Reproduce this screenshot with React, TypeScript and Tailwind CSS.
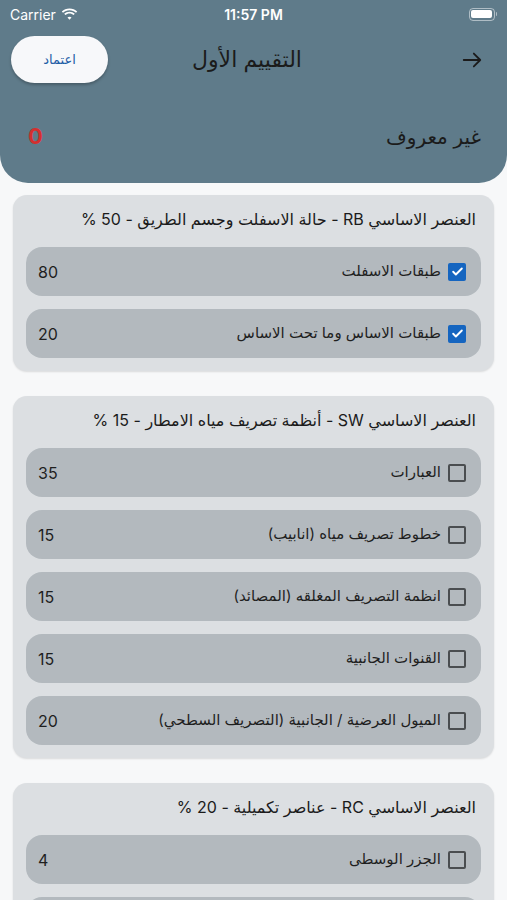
import React from 'react';

type Item = { label: string; value: number; checked?: boolean };
type Group = { title: string; items: Item[] };

const groups: Group[] = [
  {
    title: 'العنصر الاساسي RB - حالة الاسفلت وجسم الطريق - 50 %',
    items: [
      { label: 'طبقات الاسفلت', value: 80, checked: true },
      { label: 'طبقات الاساس وما تحت الاساس', value: 20, checked: true },
    ],
  },
  {
    title: 'العنصر الاساسي SW - أنظمة تصريف مياه الامطار - 15 %',
    items: [
      { label: 'العبارات', value: 35 },
      { label: 'خطوط تصريف مياه (انابيب)', value: 15 },
      { label: 'انظمة التصريف المغلقه (المصائد)', value: 15 },
      { label: 'القنوات الجانبية', value: 15 },
      { label: 'الميول العرضية / الجانبية (التصريف السطحي)', value: 20 },
    ],
  },
  {
    title: 'العنصر الاساسي RC - عناصر تكميلية - 20 %',
    items: [
      { label: 'الجزر الوسطى', value: 4 },
      { label: 'الأرصفة', value: 4 },
    ],
  },
];

const font = { fontFamily: 'Inter, "DejaVu Sans", sans-serif' };

function Checkbox({ checked }: { checked?: boolean }) {
  if (checked) {
    return (
      <span className="flex h-[18px] w-[18px] items-center justify-center rounded-[2px] bg-[#1565c0]">
        <svg width="13" height="13" viewBox="0 0 24 24" fill="none" stroke="white" strokeWidth="3.5" strokeLinecap="round" strokeLinejoin="round">
          <path d="M4 12.5l5 5L20 6.5" />
        </svg>
      </span>
    );
  }
  return <span className="h-[18px] w-[18px] rounded-[2px] border-2 border-[#4a4d50]" />;
}

function StatusBar() {
  return (
    <div dir="ltr" className="flex h-[28px] items-center justify-between px-[10px] text-white">
      <div className="flex w-[120px] items-center gap-[5px] text-[14px]">
        <span>Carrier</span>
        <svg width="17" height="12" viewBox="0 0 17 12" fill="white">
          <path d="M8.5 2.2c2.5 0 4.8 1 6.5 2.6l1.2-1.3C14.2 1.6 11.5.5 8.5.5S2.8 1.6.8 3.5L2 4.8c1.7-1.6 4-2.6 6.5-2.6z" />
          <path d="M8.5 5.5c1.6 0 3 .6 4.1 1.6l1.2-1.3C12.4 4.5 10.5 3.8 8.5 3.8S4.6 4.5 3.2 5.8l1.2 1.3c1.1-1 2.5-1.6 4.1-1.6z" />
          <path d="M8.5 8.7c.8 0 1.5.3 2 .8L8.5 11.7l-2-2.2c.5-.5 1.2-.8 2-.8z" />
        </svg>
      </div>
      <span className="text-[14px] font-semibold">11:57 PM</span>
      <div className="flex w-[120px] justify-end">
        <div className="flex items-center">
          <div className="flex h-[13px] w-[26px] items-center rounded-[4px] border border-white/50 p-[1.5px]">
            <div className="h-full w-full rounded-[2px] bg-white" />
          </div>
          <div className="ml-[1px] h-[4px] w-[1.5px] rounded-r bg-white/50" />
        </div>
      </div>
    </div>
  );
}

export default function App() {
  return (
    <div dir="rtl" className="min-h-[900px] bg-[#f7f8f9]" style={font}>
      {/* Header */}
      <div className="rounded-b-[28px] bg-[#5f7b8a] pb-[30px]">
        <StatusBar />
        <div className="mt-[8px] grid grid-cols-[1fr_auto_1fr] items-center pl-[11px] pr-[24px]">
          <div className="flex justify-start">
            <svg width="22" height="22" viewBox="0 0 24 24" fill="none" stroke="#1b1b1b" strokeWidth="2" strokeLinecap="round" strokeLinejoin="round">
              <path d="M3 12h18M14 5l7 7-7 7" />
            </svg>
          </div>
          <h1 className="text-[22px] text-[#1b1b1b]">التقييم الأول</h1>
          <div className="flex justify-end">
            <button className="h-[47px] w-[97px] rounded-full bg-[#f7f8fa] text-[13px] text-[#1e5ea6] shadow-[0_2px_3px_rgba(0,0,0,0.25)]">
              اعتماد
            </button>
          </div>
        </div>
        <div className="mt-[37px] flex items-center justify-between pl-[28px] pr-[26px]">
          <span className="text-[20px] text-[#1b1b1b]">غير معروف</span>
          <span className="text-[22px] font-bold text-[#d32f2f]">0</span>
        </div>
      </div>

      {/* Groups */}
      <div className="mt-[12px] flex flex-col gap-[25px] px-[13px]">
        {groups.map((g) => (
          <div key={g.title} className="rounded-[14px] bg-[#dcdfe2] px-[13px] pb-[13px] pt-[12px] shadow-[0_1px_2px_rgba(0,0,0,0.12)]">
            <div className="pr-[5px] text-[16px] leading-[24px] text-[#1b1b1b]">{g.title}</div>
            <div className="mt-[16px] flex flex-col gap-[13px]">
              {g.items.map((it) => (
                <div key={it.label} className="flex h-[49px] items-center justify-between rounded-[16px] bg-[#b3b9be] pl-[12px] pr-[15px]">
                  <div className="flex items-center gap-[7px]">
                    <Checkbox checked={it.checked} />
                    <span className="text-[15px] text-[#1f1f1f]">{it.label}</span>
                  </div>
                  <span className="text-[16px] text-[#1f1f1f]">{it.value}</span>
                </div>
              ))}
            </div>
          </div>
        ))}
      </div>
    </div>
  );
}
